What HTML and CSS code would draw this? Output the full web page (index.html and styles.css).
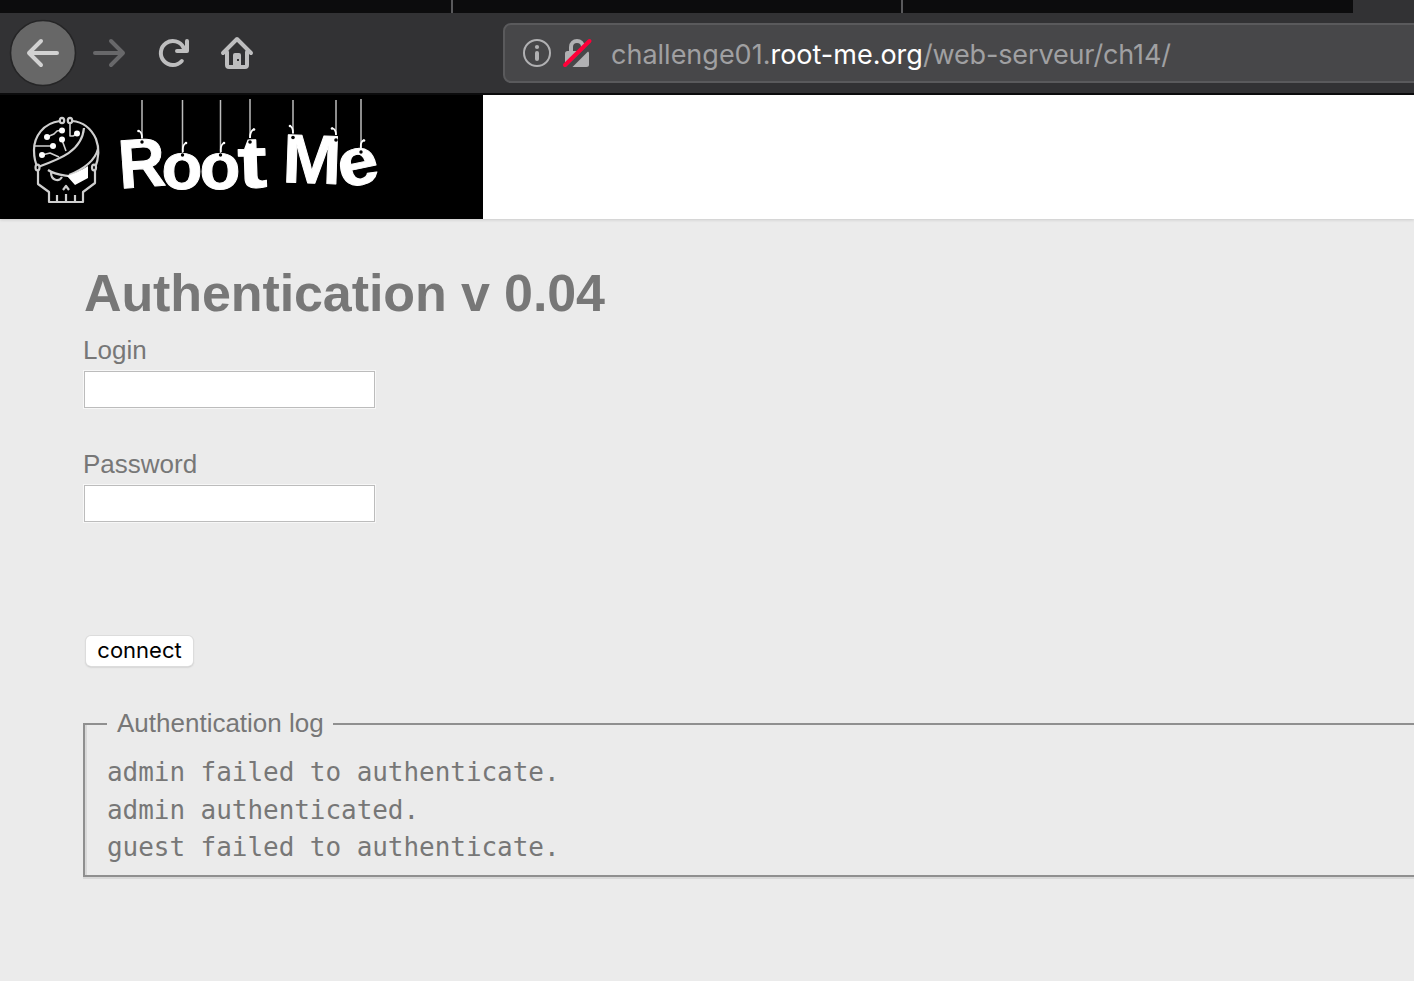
FILE: index.html
```html
<!DOCTYPE html>
<html lang="en">
<head>
<meta charset="utf-8">
<title>Authentication v 0.04</title>
<link rel="stylesheet" href="styles.css">
</head>
<body>
<div class="tabs"><div class="tab"></div><div class="tab"></div><div class="tab"></div></div>
<nav class="toolbar">
  <svg class="nav-icons" width="270" height="80" viewBox="0 13 270 80" fill="none" stroke-linecap="round" stroke-linejoin="round" stroke-width="4">
    <circle cx="43" cy="53" r="32.5" fill="#676767" stroke="#252526" stroke-width="1.6"/>
    <path d="M57 53H29M41 41L29 53L41 65" stroke="#d2d2d2"/>
    <path d="M95 53H123M111 41L123 53L111 65" stroke="#68686a"/>
    <g stroke="#bebebf">
      <path d="M181.800 61A12 12 0 1 1 183.500 47.500"/>
      <path d="M187 41V51H177"/><path d="M181 51L187 45V51Z" fill="#bebebf" stroke-width="2"/>
      <path d="M223 53L237 39L251 53M227 52V65Q227 67 229 67H245Q247 67 247 65V52"/>
      <path d="M235 66V55H239V66" stroke-width="4"/>
      <path d="M236 63.500V66H238V63.500" stroke-width="3"/>
    </g>
    <rect x="237" y="59" width="2" height="2" fill="#323234"/>
  </svg>
  <div class="address">
    <svg class="site-icons" width="72" height="32" viewBox="521 37 72 32" fill="none">
      <circle cx="537" cy="53" r="13" stroke="#b1b1b3" stroke-width="2"/>
      <circle cx="537" cy="47" r="2.100" fill="#b1b1b3"/>
      <path d="M537 53V59" stroke="#b1b1b3" stroke-width="4" stroke-linecap="round"/>
      <path d="M571 53V47A6 6 0 0 1 583 47V53" stroke="#b1b1b3" stroke-width="4"/>
      <rect x="565" y="51" width="24" height="16" rx="2.500" fill="#b1b1b3"/>
      <path d="M567 69L593 43" stroke="#474749" stroke-width="5"/>
      <path d="M565 65L589.500 41" stroke="#ff0039" stroke-width="4" stroke-linecap="round"/>
    </svg>
    <span class="url">challenge01.<b>root-me.org</b><span class="path">/web-serveur/ch14/</span></span>
  </div>
</nav>
<header class="site-header">
  <svg class="logo" width="483" height="124" viewBox="0 95 483 124">
    <g fill="none" stroke="#cfcfcf" stroke-width="2.200" stroke-linejoin="round">
      <path d="M60 121C43 123 34 137 34 150C34 157 35 163 38 168V184L49 192V202H83V192L95 183V168C99 158 99 147 96 139C91 128 84 122 72 121"/>
      <path d="M38 167C60 159 82 151 84 128M98 149C95 160 84 169 69 175"/>
      <ellipse cx="62" cy="120.500" rx="2.200" ry="2.700" fill="#000"/><ellipse cx="70" cy="120.500" rx="2.200" ry="2.700" fill="#000"/>
      <ellipse cx="37.500" cy="167.500" rx="2" ry="2.800" fill="#000"/><ellipse cx="94" cy="167.500" rx="2" ry="2.800" fill="#000"/>
      <path d="M70 124V136H73L77 134M47 137L54 134L57 131L62 130M35 146H53M62 140L66 151M42 155L50 153L59 157" stroke-width="1.600"/>
      <path d="M48 170C55 175 62 175 69 176M51 172C51 181 59 182 62 177M63 190L66 186L69 190M57 201V195M66 201V194M75 201V195"/>
    </g>
    <g fill="#fff">
      <circle cx="77" cy="133.500" r="3"/><circle cx="47" cy="137" r="3"/><circle cx="62" cy="130.500" r="3"/>
      <circle cx="53" cy="146" r="3"/><circle cx="62" cy="139.500" r="3"/><circle cx="42" cy="155" r="3"/>
      <path d="M67 176Q79 172 88 166V178L75 185Z"/>
    </g>
    <g class="logo-text">
      <text transform="translate(120 188.500) rotate(-4) scale(.94 1)" font-size="69">R</text>
      <text transform="translate(161.500 188.500)" font-size="67">o</text>
      <text transform="translate(199.500 188.500)" font-size="67">o</text>
      <text transform="translate(238.500 188) rotate(-2) scale(1.200 1)" font-size="73">t</text>
      <text transform="translate(282 182) rotate(2) scale(1.020 1)" font-size="69">M</text>
      <text transform="translate(342 188.500) rotate(-12) scale(1.090 1)" font-size="67">e</text>
    </g>
    <g fill="none" stroke="#fff" stroke-width="1.500">
      <path d="M142 100V139M182.500 100V153M220.500 100V153M250 99V138M293 100V134M336 100V135M361 99V148" stroke="#bcbcbc"/>
      <path d="M142 138Q142 132 139 131M183 152Q182 145 186 143M221 152Q220 145 224 143M250 138Q250 131 254 129M293 133Q293 127 290 126M336 135Q336 129 332 128M361 148Q360 142 364 140" stroke-width="1.800"/>
    </g>
    <g fill="#fff"><circle cx="138.500" cy="131" r="1.300"/><circle cx="186" cy="143" r="1.300"/><circle cx="224" cy="143" r="1.300"/><circle cx="254" cy="129.500" r="1.300"/><circle cx="290" cy="126" r="1.300"/><circle cx="332" cy="128.500" r="1.300"/><circle cx="364" cy="140.500" r="1.300"/></g>
    <g fill="#000"><circle cx="142" cy="142" r="1.700"/><circle cx="182.500" cy="155" r="1.700"/><circle cx="220.500" cy="155" r="1.700"/><circle cx="250" cy="142" r="1.800"/><circle cx="293" cy="137.500" r="1.800"/><circle cx="336" cy="140" r="1.800"/><circle cx="361" cy="152" r="1.700"/></g>
  </svg>
</header>
<main class="content">
  <h1>Authentication v 0.04</h1>
  <form>
    <label for="login">Login</label>
    <input id="login" type="text">
    <label for="password">Password</label>
    <input id="password" type="password">
    <button type="button">connect</button>
  </form>
  <fieldset>
    <legend>Authentication log</legend>
    <pre>admin failed to authenticate.
admin authenticated.
guest failed to authenticate.</pre>
  </fieldset>
</main>
</body>
</html>
```
FILE: styles.css
```css
* { box-sizing: border-box; }
body {
  margin: 0;
  height: 981px;
  overflow: hidden;
  background: #ebebeb;
  color: #777;
  font: 26px/30px "Liberation Sans", Arial, sans-serif;
}
svg { display: block; flex: none; }
.tabs { display: flex; height: 13px; background: #323234; }
.tab { width: 450px; background: #0c0c0d; border-right: 2px solid #5a5a5c; }
.tab:first-child { width: 453px; }
.tab:last-child { border-right: 0; }
.toolbar {
  display: flex;
  height: 82px;
  background: #323234;
  border-bottom: 2px solid #0c0c0d;
}
.address {
  display: flex;
  align-items: center;
  width: 940px;
  height: 60px;
  flex: none;
  margin: 10px 0 0 233px;
  padding-left: 16px;
  background: #474749;
  border: 2px solid #5a5a5c;
  border-radius: 8px;
}
.url {
  margin: 3px 0 0 18px;
  color: #a0a0a2;
  font: 27px/34px Inter, sans-serif;
  white-space: nowrap;
}
.url b { color: #fff; font-weight: 400; }
.path { letter-spacing: -.14px; }
.site-header { height: 124px; background: #fff; box-shadow: 0 1px 3px rgba(0, 0, 0, .14); }
.logo { background: #000; }
.logo-text {
  fill: #fff;
  stroke: #fff;
  stroke-width: 1px;
  stroke-linejoin: round;
  font-family: "Liberation Sans", Arial, sans-serif;
  font-weight: 700;
}
.content { padding: 44px 0 0 83px; }
h1 { margin: 0 0 12px; padding-left: 1px; font-size: 52px; line-height: 60px; letter-spacing: -.1px; }
form { display: flex; flex-direction: column; align-items: flex-start; }
input {
  width: 291px;
  height: 37px;
  margin: 6px 0 41px 1px;
  background: #fff;
  border: 1px solid #bcbcbc;
  outline: 1px solid #f7f7f7;
}
button {
  width: 107px;
  height: 30px;
  margin: 73px 0 42px 3px;
  padding: 0 0 2px;
  background: #fff;
  border: 0;
  border-radius: 5px;
  box-shadow: 0 0 0 1px #dcdcdc, 0 1px 2px #aaa;
  color: #000;
  font: 22px/28px Inter, sans-serif;
}
fieldset {
  width: 1400px;
  height: 169px;
  margin: 0;
  padding: 14px 22px 0;
  border: 2px solid #8f8f8f;
  box-shadow: inset 2px 0 #d8d8d8, 0 2px #d8d8d8;
}
legend { padding: 0 9px 2px 10px; }
pre { margin: 0; font: 26px/37.5px "DejaVu Sans Mono", monospace; letter-spacing: -.05px; }
```
